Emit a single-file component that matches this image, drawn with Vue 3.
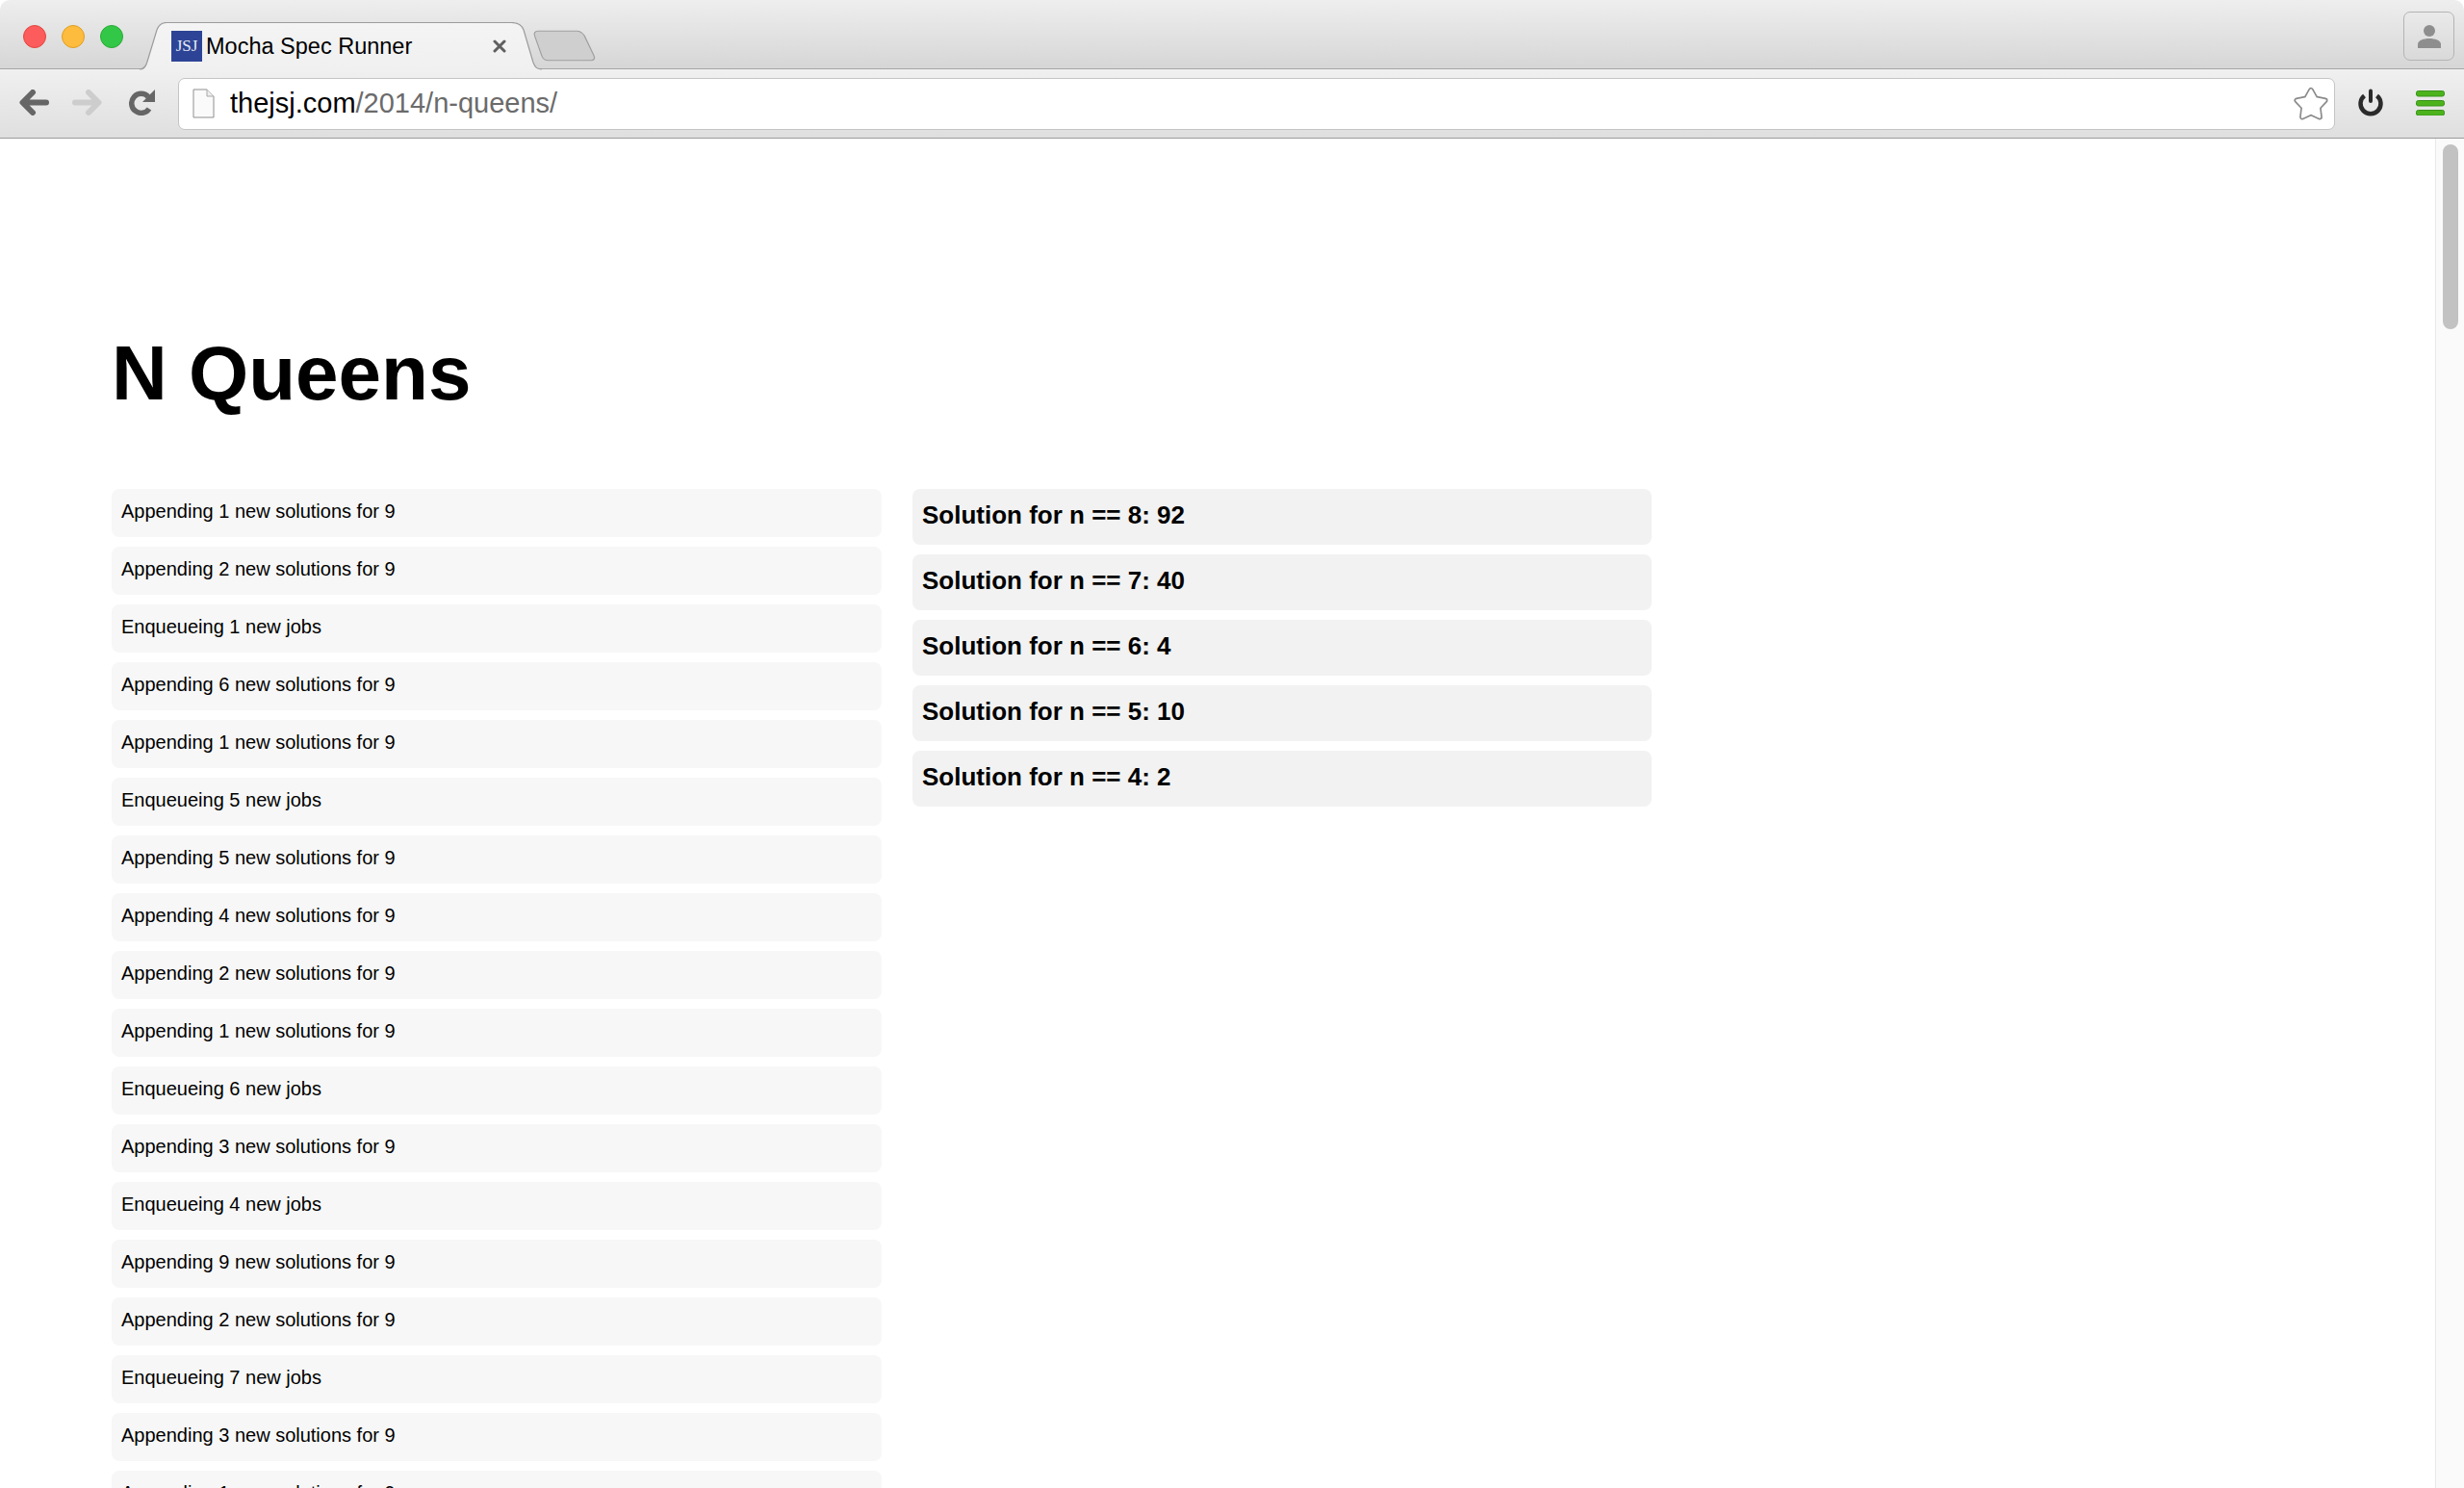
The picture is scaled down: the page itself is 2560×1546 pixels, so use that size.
<script setup>
const logs = [
  'Appending 1 new solutions for 9',
  'Appending 2 new solutions for 9',
  'Enqueueing 1 new jobs',
  'Appending 6 new solutions for 9',
  'Appending 1 new solutions for 9',
  'Enqueueing 5 new jobs',
  'Appending 5 new solutions for 9',
  'Appending 4 new solutions for 9',
  'Appending 2 new solutions for 9',
  'Appending 1 new solutions for 9',
  'Enqueueing 6 new jobs',
  'Appending 3 new solutions for 9',
  'Enqueueing 4 new jobs',
  'Appending 9 new solutions for 9',
  'Appending 2 new solutions for 9',
  'Enqueueing 7 new jobs',
  'Appending 3 new solutions for 9',
  'Appending 1 new solutions for 9'
]
const solutions = [
  'Solution for n == 8: 92',
  'Solution for n == 7: 40',
  'Solution for n == 6: 4',
  'Solution for n == 5: 10',
  'Solution for n == 4: 2'
]
</script>

<template>
  <div class="window">
    <header class="chrome">
      <div class="strip">
        <div class="lights">
          <span class="light red"></span>
          <span class="light amber"></span>
          <span class="light green"></span>
        </div>
        <div class="tab">
          <svg class="tab-shape" viewBox="0 0 418 50" width="418" height="50">
            <defs>
              <linearGradient id="tabfill" x1="0" y1="0" x2="0" y2="1">
                <stop offset="0" stop-color="#f4f4f4" />
                <stop offset="1" stop-color="#f0f0f0" />
              </linearGradient>
            </defs>
            <path d="M0 49C5 49 7 45 8 41L18 8C20 3 23 .5 28 .5H386C393 .5 397 3 399 8L409 42C411 47 413 49 418 49V50H0Z" fill="url(#tabfill)" />
            <path d="M0 49C5 49 7 45 8 41L18 8C20 3 23 .5 28 .5H386C393 .5 397 3 399 8L409 42C411 47 413 49 418 49" fill="none" stroke="#9c9c9c" stroke-width="1.2" />
          </svg>
          <span class="favicon">JSJ</span>
          <span class="tab-title">Mocha Spec Runner</span>
          <svg class="tab-close" viewBox="0 0 14 14" width="14" height="14">
            <path d="M2 2L12 12M12 2L2 12" stroke="#5f5f5f" stroke-width="3" stroke-linecap="round" />
          </svg>
        </div>
        <svg class="newtab" viewBox="0 0 66 33" width="65" height="33">
          <path d="M1.500 6C.5 3 2 1 5 1H46C50 1 52 3 54 6L64 27C65.500 30 64 32 61 32H16C12 32 10 30 9 27Z" fill="#cfcfcf" stroke="#9f9f9f" stroke-width="1.2" />
        </svg>
        <div class="profile">
          <svg viewBox="0 0 26 26" width="26" height="26">
            <circle cx="13" cy="7" r="6" fill="#8e8e8e" />
            <path d="M1 25V21C1 17 7 15 13 15S25 17 25 21V25Z" fill="#8e8e8e" />
          </svg>
        </div>
      </div>
      <div class="toolbar">
        <svg class="back" viewBox="0 0 31 27" width="31" height="27">
          <path d="M28 13.500H4M14 3L3.500 13.500L14 24" fill="none" stroke="#666" stroke-width="6" stroke-linecap="round" stroke-linejoin="round" />
        </svg>
        <svg class="forward" viewBox="0 0 31 27" width="31" height="27">
          <path d="M3 13.500H27M17 3L27.500 13.500L17 24" fill="none" stroke="#cdcdcd" stroke-width="6" stroke-linecap="round" stroke-linejoin="round" />
        </svg>
        <svg class="reload" viewBox="0 0 27 27" width="27" height="27">
          <path d="M20 7.500A10 10 0 1 0 21 20" fill="none" stroke="#666" stroke-width="5.500" />
          <path d="M27 0V13H14Z" fill="#666" />
        </svg>
        <div class="omnibox">
          <svg class="page" viewBox="0 0 23 31" width="23" height="31">
            <path d="M1 1H15L22 8V30H1Z" fill="#fafafa" stroke="#8f8f8f" />
            <path d="M15 1V8H22" fill="#eee" stroke="#a8a8a8" />
          </svg>
          <span class="url"><span class="host">thejsj.com</span><span class="path">/2014/n-queens/</span></span>
          <svg class="star" viewBox="0 0 36 34" width="40" height="38">
            <path d="M18 4L22.400 11.900L31.300 13.700L25.100 20.300L26.200 29.300L18 25.500L9.800 29.300L10.900 20.300L4.700 13.700L13.600 11.900Z" fill="#8a8a8a" stroke="#8a8a8a" stroke-width="5" stroke-linejoin="round" />
            <path d="M18 4L22.400 11.900L31.300 13.700L25.100 20.300L26.200 29.300L18 25.500L9.800 29.300L10.900 20.300L4.700 13.700L13.600 11.900Z" fill="#fff" stroke="#fff" stroke-width="2" stroke-linejoin="round" />
          </svg>
        </div>
        <svg class="power" viewBox="0 0 28 29" width="28" height="29">
          <path d="M7.500 7.500A10.500 10.500 0 1 0 20.500 7.500" fill="none" stroke="#2b2b2b" stroke-width="4.500" />
          <path d="M14 2.500V13" stroke="#2b2b2b" stroke-width="4" stroke-linecap="round" />
        </svg>
        <svg class="menu" viewBox="0 0 30 26" width="30" height="26">
          <rect x=".5" y=".5" width="29" height="5.500" rx="2" fill="#4db31c" stroke="#38931a" />
          <rect x=".5" y="10.500" width="29" height="5.500" rx="2" fill="#4db31c" stroke="#38931a" />
          <rect x=".5" y="20.500" width="29" height="5.500" rx="2" fill="#4db31c" stroke="#38931a" />
        </svg>
      </div>
    </header>
    <div class="viewport">
      <main class="page-body">
        <h1 class="title">N Queens</h1>
        <div class="columns">
          <section class="log">
            <div v-for="(line, i) in logs" :key="i" class="log-row">{{ line }}</div>
          </section>
          <section class="results">
            <div v-for="s in solutions" :key="s" class="result-row">{{ s }}</div>
          </section>
        </div>
      </main>
      <aside class="scrollbar"><div class="thumb"></div></aside>
    </div>
  </div>
</template>

<style>
html, body { margin: 0; background: #fff; overflow: hidden; }
</style>

<style scoped>
.window {
  width: 2560px;
  height: 1546px;
  overflow: hidden;
  display: flex;
  flex-direction: column;
  font-family: "Liberation Sans", Arial, sans-serif;
  color: #000;
  background: #fff;
}
.chrome { flex: none; border-radius: 10px 10px 0 0; overflow: hidden; }
.strip {
  height: 72px;
  box-sizing: border-box;
  border-bottom: 1px solid #a6a6a6;
  background: linear-gradient(#eeeeee, #e8e8e8 25%, #d6d6d6);
  display: flex;
  align-items: flex-start;
}
.lights { display: flex; gap: 16px; margin: 26px 0 0 24px; }
.light { width: 24px; height: 24px; border-radius: 50%; box-sizing: border-box; border: 1px solid; }
.red { background: #fc5c5c; border-color: #e2463f; }
.amber { background: #fdbc3e; border-color: #e09e1f; }
.green { background: #33c748; border-color: #2aaa35; }
.tab {
  position: relative;
  width: 418px;
  height: 50px;
  margin: 23px 0 0 17px;
  box-sizing: border-box;
  padding: 9px 37px 0 33px;
  display: flex;
  align-items: flex-start;
}
.tab-shape { position: absolute; left: 0; top: 0; }
.favicon {
  position: relative;
  width: 32px;
  height: 32px;
  flex: none;
  background: #2d4496;
  color: #e4e8f4;
  font: 17px/32px "Liberation Serif", serif;
  text-align: center;
}
.tab-title {
  position: relative;
  margin-left: 4px;
  font-size: 23.5px;
  line-height: 32px;
  white-space: nowrap;
}
.tab-close { position: relative; margin: 9px 0 0 auto; }
.newtab { flex: none; margin: 31px 0 0 -9px; }
.profile {
  margin: 12px 10px 0 auto;
  width: 53px;
  height: 51px;
  box-sizing: border-box;
  border: 1px solid #b4b4b4;
  border-radius: 7px;
  display: flex;
  align-items: center;
  justify-content: center;
}
.toolbar {
  height: 72px;
  box-sizing: border-box;
  border-bottom: 1px solid #9a9a9a;
  background: linear-gradient(#f0f0f0, #dfdfdf);
  display: flex;
  align-items: center;
  padding-left: 20px;
}
.back, .forward, .reload, .power, .menu { flex: none; margin-top: -2px; }
.forward { margin-left: 24px; }
.reload { margin-left: 28px; }
.omnibox {
  width: 2241px;
  height: 54px;
  margin-left: 24px;
  box-sizing: border-box;
  border: 1px solid #c4c4c4;
  border-radius: 7px;
  background: #fff;
  display: flex;
  align-items: center;
  padding: 0 4px 0 14px;
}
.page { flex: none; }
.url { margin-left: 16px; font-size: 29px; white-space: nowrap; }
.host { color: #000; }
.path { color: #6b6b6b; }
.star { flex: none; margin-left: auto; }
.power { margin-left: 23px; }
.menu { margin-left: 33px; }
.viewport { flex: 1; min-height: 0; display: flex; }
.page-body { flex: 1; min-width: 0; padding: 198px 0 0 116px; }
.title {
  margin: 0 0 74px;
  font-size: 80px;
  line-height: 92px;
  font-weight: 700;
}
.columns { display: flex; align-items: flex-start; gap: 32px; }
.log { width: 800px; display: flex; flex-direction: column; gap: 10px; }
.log-row {
  height: 50px;
  box-sizing: border-box;
  padding: 8px 10px 12px;
  background: #f7f7f7;
  border-radius: 8px;
  font-size: 20px;
  line-height: 30px;
}
.results { width: 768px; display: flex; flex-direction: column; gap: 10px; }
.result-row {
  height: 58px;
  box-sizing: border-box;
  padding: 8px 10px 12px;
  background: #f2f2f2;
  border-radius: 8px;
  font-size: 26px;
  line-height: 38px;
  font-weight: 700;
}
.scrollbar {
  flex: none;
  width: 30px;
  box-sizing: border-box;
  padding: 6px 6px 0 7px;
  background: #fafafa;
  border-left: 1px solid #e8e8e8;
}
.thumb { height: 192px; border-radius: 8px; background: #c2c2c2; }
</style>
